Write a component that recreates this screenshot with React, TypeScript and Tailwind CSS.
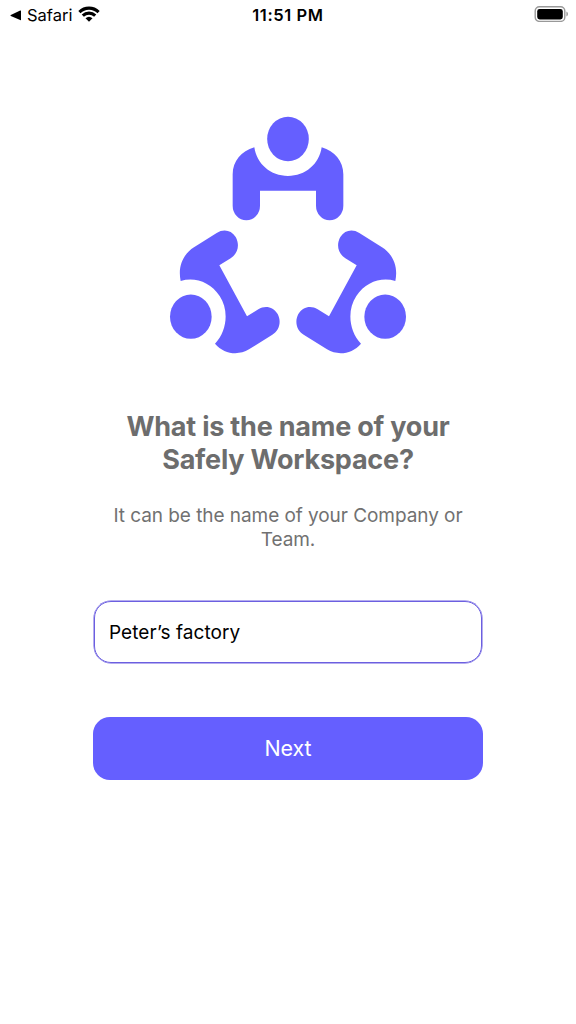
import { useState } from 'react';

function StatusBar() {
  return (
    <header className="grid h-[30px] grid-cols-3 items-center pl-2.5 pr-2 text-black">
      <div className="flex items-center">
        <svg className="h-[11px] w-[12px]" viewBox="0 0 12 11" fill="currentColor">
          <path d="M.8 5 10.2.6Q11 .3 11 1.1V9.7Q11 10.5 10.2 10.1L.8 5.9Q0 5.4.8 5Z" />
        </svg>
        <span className="ml-[5px] text-[16.5px] leading-5">Safari</span>
        <svg className="ml-[6px] h-4 w-[22px] -translate-y-px" viewBox="0 0 22 16" fill="none" stroke="currentColor" strokeWidth="3.1">
          <path d="M1.4 6.1Q5.4 2.1 11 2.1T20.6 6.1" />
          <path d="M4.8 9.7Q7.5 7.1 11 7.1T17.2 9.7" />
          <path d="M7.5 12.3Q11 9.3 14.5 12.3L11 15.8Z" fill="currentColor" stroke="none" />
        </svg>
      </div>
      <span className="text-center text-[16.5px] font-semibold leading-5 tracking-[0.6px] -ml-0.5">11:51 PM</span>
      <svg className="h-4 w-[34px] -translate-y-px justify-self-end" viewBox="0 0 34 16">
        <rect x="1.2" y=".8" width="29.6" height="14.6" rx="4.2" fill="none" stroke="#999" strokeWidth="1.4" />
        <rect x="3.2" y="3" width="25.6" height="10.4" rx="2.4" />
        <path d="M32.4 5.6Q34 6.4 34 8T32.4 10.6Z" fill="#999" />
      </svg>
    </header>
  );
}

function TeamLogo() {
  return (
    <svg className="h-64 w-64" viewBox="0 0 768 768" fill="currentColor">
      <ellipse cx="384" cy="102" rx="62.5" ry="66.5" />
      <path d="M283 127C244 138 218 169 218 208V302A41 44 0 0 0 300 302V257H468V302A41 44 0 0 0 550 302V208C550 169 524 138 485 127C478 177 436 213 384 213S290 177 283 127Z" />
      <ellipse cx="92.5" cy="635" rx="62.5" ry="66.5" />
      <path d="M62 528C53 484 69 448 102 427L170 384C190 371 214 375 227 396C240 419 234 446 212 460L178 481L261 634L295 613C315 600 340 605 353 627C365 650 358 677 337 689L267 733C234 753 192 747 165 716C202 678 207 615 179 573C151 531 104 515 62 528Z" />
      <ellipse cx="675.5" cy="635" rx="62.5" ry="66.5" />
      <path d="M706 528C715 484 699 448 666 427L598 384C578 371 554 375 541 396C528 419 534 446 556 460L590 481L507 634L473 613C453 600 428 605 415 627C403 650 410 677 431 689L501 733C534 753 576 747 603 716C566 678 561 615 589 573C617 531 664 515 706 528Z" />
    </svg>
  );
}

export default function App() {
  const [name, setName] = useState('Peter’s factory');

  return (
    <div className="min-h-screen bg-white font-['Inter',sans-serif]">
      <StatusBar />
      <main className="flex flex-col items-center pt-[75px] text-[#655fff]">
        <TeamLogo />
        <h1 className="mt-[49px] whitespace-nowrap text-center text-[27px] font-bold leading-[33px] tracking-[-0.22px] text-[#6d6d6d]">
          What is the name of your
          <br />
          Safely Workspace?
        </h1>
        <p className="mt-[28px] whitespace-nowrap text-center text-[19px] leading-6 tracking-[-0.06px] text-[#717171]">
          It can be the name of your Company or
          <br />
          Team.
        </p>
        <input
          className="mt-[49px] h-[62px] w-[388px] rounded-[17px] border border-[#6c5fe0] px-[14px] text-[19px] tracking-[0.06px] text-black shadow-[0_0_0_0.5px_#6c5fe0] outline-none"
          value={name}
          onChange={(e) => setName(e.target.value)}
        />
        <button className="mt-[54px] h-[63px] w-[390px] rounded-[17px] bg-[#655fff] text-[21.5px] tracking-[-0.1px] text-white">
          Next
        </button>
      </main>
    </div>
  );
}
